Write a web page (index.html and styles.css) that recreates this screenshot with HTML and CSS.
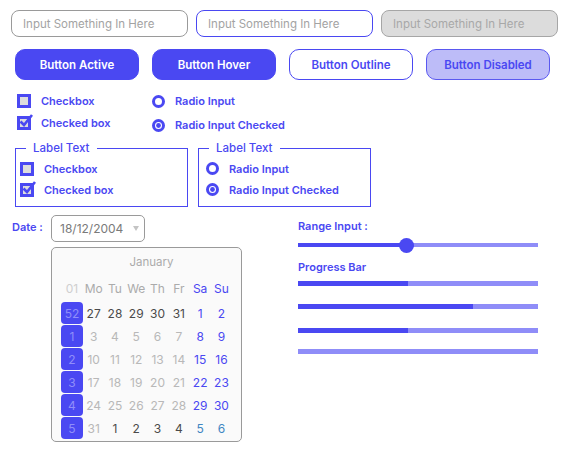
FILE: index.html
```html
<!DOCTYPE html>
<html>
<head>
<meta charset="utf-8">
<link rel="stylesheet" href="styles.css">
</head>
<body>
<div class="inputs">
  <input class="field" placeholder="Input Something In Here">
  <input class="field field-hover" placeholder="Input Something In Here">
  <input class="field" placeholder="Input Something In Here" disabled>
</div>

<div class="buttons">
  <button class="btn btn-active">Button Active</button>
  <button class="btn btn-hover">Button Hover</button>
  <button class="btn btn-outline">Button Outline</button>
  <button class="btn btn-disabled">Button Disabled</button>
</div>

<div class="choices">
  <div class="col col-check">
    <label class="opt"><svg class="cb" width="17" height="17" viewBox="0 0 17 17"><rect x="1.5" y="4.5" width="11" height="11" fill="#dddddd" stroke="#4a48f2" stroke-width="3"/></svg>Checkbox</label>
    <label class="opt"><svg class="cb" width="17" height="17" viewBox="0 0 17 17"><rect x="1.5" y="4.5" width="11" height="11" fill="#dddddd" stroke="#4a48f2" stroke-width="3"/><path d="M3.5 8.5 L7 12 L15 2" fill="none" stroke="#4a48f2" stroke-width="2.6"/></svg>Checked box</label>
  </div>
  <div class="col col-radio">
    <label class="opt"><svg class="rd" width="13" height="13" viewBox="0 0 13 13"><circle cx="6.5" cy="6.5" r="5" fill="#fff" stroke="#4a48f2" stroke-width="3"/></svg>Radio Input</label>
    <label class="opt"><svg class="rd" width="13" height="13" viewBox="0 0 13 13"><circle cx="6.5" cy="6.5" r="5" fill="#fff" stroke="#4a48f2" stroke-width="3"/><circle cx="6.5" cy="6.5" r="2.4" fill="#4a48f2"/></svg>Radio Input Checked</label>
  </div>
</div>

<div class="groups">
  <fieldset class="group group-check">
    <legend>Label Text</legend>
    <label class="opt"><svg class="cb" width="17" height="17" viewBox="0 0 17 17"><rect x="1.5" y="4.5" width="11" height="11" fill="#dddddd" stroke="#4a48f2" stroke-width="3"/></svg>Checkbox</label>
    <label class="opt"><svg class="cb" width="17" height="17" viewBox="0 0 17 17"><rect x="1.5" y="4.5" width="11" height="11" fill="#dddddd" stroke="#4a48f2" stroke-width="3"/><path d="M3.5 8.5 L7 12 L15 2" fill="none" stroke="#4a48f2" stroke-width="2.6"/></svg>Checked box</label>
  </fieldset>
  <fieldset class="group group-radio">
    <legend>Label Text</legend>
    <label class="opt"><svg class="rd" width="13" height="13" viewBox="0 0 13 13"><circle cx="6.5" cy="6.5" r="5" fill="#fff" stroke="#4a48f2" stroke-width="3"/></svg>Radio Input</label>
    <label class="opt"><svg class="rd" width="13" height="13" viewBox="0 0 13 13"><circle cx="6.5" cy="6.5" r="5" fill="#fff" stroke="#4a48f2" stroke-width="3"/><circle cx="6.5" cy="6.5" r="2.4" fill="#4a48f2"/></svg>Radio Input Checked</label>
  </fieldset>
</div>

<div class="lower">
  <div class="date">
    <div class="date-label">Date :</div>
    <div class="select">18/12/2004<span class="caret"></span></div>
    <div class="calendar">
      <div class="month">January</div>
      <div class="grid">
        <span class="wk-h">01</span><span class="dh">Mo</span><span class="dh">Tu</span><span class="dh">We</span><span class="dh">Th</span><span class="dh">Fr</span><span class="we wh">Sa</span><span class="we wh">Su</span>

        <span class="wk">52</span><span class="dk">27</span><span class="dk">28</span><span class="dk">29</span><span class="dk">30</span><span class="dk">31</span><span class="we">1</span><span class="we">2</span>

        <span class="wk">1</span><span class="lt">3</span><span class="lt">4</span><span class="lt">5</span><span class="lt">6</span><span class="lt">7</span><span class="we">8</span><span class="we">9</span>

        <span class="wk">2</span><span class="lt">10</span><span class="lt">11</span><span class="lt">12</span><span class="lt">13</span><span class="lt">14</span><span class="we">15</span><span class="we">16</span>

        <span class="wk">3</span><span class="lt">17</span><span class="lt">18</span><span class="lt">19</span><span class="lt">20</span><span class="lt">21</span><span class="we">22</span><span class="we">23</span>

        <span class="wk">4</span><span class="lt">24</span><span class="lt">25</span><span class="lt">26</span><span class="lt">27</span><span class="lt">28</span><span class="we">29</span><span class="we">30</span>

        <span class="wk">5</span><span class="lt">31</span><span class="dk">1</span><span class="dk">2</span><span class="dk">3</span><span class="dk">4</span><span class="nx">5</span><span class="nx">6</span>
      </div>
    </div>
  </div>

  <div class="meters">
    <div class="meter-label">Range Input :</div>
    <input class="range" type="range" min="0" max="100" value="45">
    <div class="meter-label progress-label">Progress Bar</div>
    <div class="bar bar-1"><div class="fill" style="width:46%"></div></div>
    <div class="bar bar-2"><div class="fill" style="width:73%"></div></div>
    <div class="bar bar-3"><div class="fill" style="width:46%"></div></div>
    <div class="bar bar-4"><div class="fill" style="width:0%"></div></div>
  </div>
</div>
</body>
</html>
```

FILE: styles.css
```css
* { box-sizing: border-box; }

body {
  margin: 0;
  padding: 10px 8px 0 11px;
  font-family: Inter, "Noto Sans", sans-serif;
  color: #4a48f2;
  background: #fff;
  width: 565px;
  height: 456px;
  overflow: hidden;
}

.inputs {
  display: flex;
  gap: 8px;
}

.field {
  width: 177px;
  height: 27px;
  border: 1px solid #9a9a9a;
  border-radius: 8px;
  padding: 0 0 0 11px;
  font-family: Inter, sans-serif;
  font-size: 11.5px;
  background: #fff;
  outline: none;
}
.field::placeholder { color: #a3a3a3; }
.field-hover { border-color: #4a48f2; }
.field:disabled { background: #dcdcdc; border-color: #a6a6a6; }
.field:disabled::placeholder { color: #a8a8a8; }

.buttons {
  display: flex;
  gap: 13px;
  margin-top: 12px;
  padding-left: 4px;
}

.btn {
  width: 124px;
  height: 31px;
  border-radius: 10px;
  font-family: Inter, sans-serif;
  font-size: 11.5px;
  font-weight: 600;
  border: 1px solid #4a48f2;
  background: #4a48f2;
  color: #fff;
  padding: 0;
}
.btn-outline { background: #fff; color: #4a48f2; }
.btn-disabled { background: #bdbcf8; color: #4a48f2; border-color: #5a58f0; }

.choices {
  display: flex;
  margin-top: 10px;
  padding-left: 6px;
}
.col { display: flex; flex-direction: column; }
.col-check { width: 135px; }
.col-radio .opt + .opt { margin-top: 2px; }

.opt {
  display: flex;
  align-items: center;
  height: 22px;
  font-size: 11px;
  font-weight: 600;
  color: #4a48f2;
}
.cb { margin-right: 7px; margin-top: -3px; }
.rd { margin-right: 10px; }

.groups {
  display: flex;
  gap: 10px;
  margin-top: 5px;
  margin-left: 4px;
}

.group {
  width: 173px;
  margin: 0;
  border: 1px solid #4a48f2;
  padding: 3px 0 6px 4px;
  min-width: 0;
}
.group .opt { height: 21px; }
.group legend {
  margin-left: 6px;
  padding: 0 7px;
  font-size: 11.5px;
  font-weight: 500;
  line-height: 14px;
  height: 14px;
}
.group-radio { padding-left: 7px; }
.group-radio legend { margin-left: 3px; }

.lower {
  display: flex;
  margin-top: 8px;
}

.date {
  width: 287px;
  display: grid;
  grid-template-columns: 40px auto;
  grid-template-rows: 27px auto;
  row-gap: 5px;
  align-content: start;
  justify-items: start;
}
.date-label {
  font-size: 11px;
  font-weight: 600;
  align-self: center;
  padding-left: 1px;
  margin-top: -3px;
}
.select {
  width: 94px;
  height: 27px;
  border: 1px solid #9a9a9a;
  border-radius: 5px;
  display: flex;
  align-items: center;
  padding-left: 8px;
  font-size: 12px;
  color: #7a7a7a;
}
.caret {
  margin-left: 10px;
  width: 0;
  height: 0;
  border-left: 3.5px solid transparent;
  border-right: 3.5px solid transparent;
  border-top: 5px solid #c4c4c4;
}
.calendar {
  grid-column: 2;
  width: 191px;
  height: 195px;
  border: 1px solid #9a9a9a;
  border-radius: 5px;
  background: #fafafa;
  padding: 0 9px;
}
.month {
  height: 29px;
  line-height: 29px;
  text-align: center;
  font-size: 11.5px;
  color: #ababab;
  padding-left: 10px;
}
.grid {
  display: grid;
  grid-template-columns: 22px repeat(7, 21.3px);
  grid-template-rows: 25px repeat(6, 23px);
  font-size: 12px;
}
.grid span {
  display: flex;
  align-items: center;
  justify-content: center;
}
.grid .wk-h { color: #cfcfcf; padding-bottom: 2px; }
.grid .dh { color: #ababab; padding-bottom: 2px; }
.grid .wk {
  background: #4a48f2;
  color: #908ef9;
  border-radius: 4px;
  height: 22px;
}
.grid .dk { color: #4a4a4a; }
.grid .lt { color: #b8b8b8; }
.grid .we { color: #4a48f2; }
.grid .wh { padding-bottom: 2px; }
.grid .nx { color: #3f86c2; }

.meters {
  width: 240px;
  display: flex;
  flex-direction: column;
}
.meter-label {
  font-size: 11px;
  font-weight: 600;
  height: 16px;
  line-height: 16px;
  margin-top: 3px;
}
.range {
  -webkit-appearance: none;
  appearance: none;
  width: 240px;
  height: 4px;
  margin: 9px 0 0 0;
  background: linear-gradient(to right, #4a48f2 0, #4a48f2 45%, #8f8df8 45%, #8f8df8 100%);
  outline: none;
}
.range::-webkit-slider-thumb {
  -webkit-appearance: none;
  appearance: none;
  width: 15px;
  height: 15px;
  border-radius: 50%;
  background: #4a48f2;
  border: none;
}
.progress-label { margin-top: 12px; }
.bar {
  height: 5px;
  background: #8f8df8;
}
.bar-1 { margin-top: 6px; }
.bar-2 { margin-top: 18px; }
.bar-3 { margin-top: 19px; }
.bar-4 { margin-top: 16px; }
.fill {
  height: 100%;
  background: #4a48f2;
}
```
